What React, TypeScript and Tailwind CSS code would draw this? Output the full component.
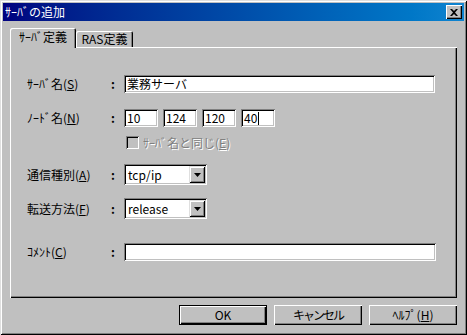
const raised =
  'shadow-[inset_1px_1px_0_#dfdfdf,inset_-1px_-1px_0_#000,inset_2px_2px_0_#fff,inset_-2px_-2px_0_#808080]';
const sunken =
  'shadow-[inset_1px_1px_0_#808080,inset_-1px_-1px_0_#fff,inset_2px_2px_0_#000,inset_-2px_-2px_0_#c0c0c0]';
const btn = 'shadow-[inset_1px_1px_0_#fff,inset_-1px_-1px_0_#000,inset_-2px_-2px_0_#808080]';

function Mn({ k }: { k: string }) {
  return (
    <span>
      (<span className="underline underline-offset-[1px]">{k}</span>)
    </span>
  );
}

function Field({ value, width, caret }: { value: string; width: string; caret?: boolean }) {
  return (
    <div className={`${width} h-[18px] bg-white ${sunken} flex items-center pl-[3px] text-black`}>
      <span className="leading-none">{value}</span>
      {caret && <span className="w-px h-[13px] bg-black ml-px" />}
    </div>
  );
}

function Select({ value }: { value: string }) {
  return (
    <div className={`w-[83px] h-[21px] bg-white ${sunken} flex items-center p-[2px]`}>
      <span className="flex-1 pl-[2px] leading-none">{value}</span>
      <div className={`w-[16px] h-[17px] bg-[#c0c0c0] ${raised} flex items-center justify-center`}>
        <svg width="7" height="4" viewBox="0 0 7 4">
          <path d="M0 0h7L3.5 4z" fill="#000" />
        </svg>
      </div>
    </div>
  );
}

function Row({ label, children, className }: { label: React.ReactNode; children: React.ReactNode; className: string }) {
  return (
    <div className={`flex items-center ${className}`}>
      <div className="w-[84px]">{label}</div>
      <div className="w-[13px] font-bold">:</div>
      {children}
    </div>
  );
}

export default function App() {
  return (
    <div
      className={`w-[467px] h-[335px] bg-[#c0c0c0] ${raised} p-[3px] flex flex-col text-[12px] text-black select-none`}
      style={{ fontFamily: '"Noto Sans CJK JP", "Noto Sans", sans-serif' }}
    >
      {/* Title bar */}
      <div className="h-[18px] bg-linear-to-r from-[#000080] to-[#1084d0] flex items-center justify-between pl-[2px] pr-[2px]">
        <span className="text-white leading-none">ｻｰﾊﾞの追加</span>
        <div className={`w-[16px] h-[14px] bg-[#c0c0c0] ${btn} flex items-center justify-center`}>
          <svg width="8" height="7" viewBox="0 0 8 7">
            <path d="M0 0h2l2 2 2-2h2L5 3.5 8 7H6L4 5 2 7H0l3-3.5z" fill="#000" />
          </svg>
        </div>
      </div>

      <div className="flex-1 flex flex-col px-[7px] pt-[7px]">
        {/* Tabs */}
        <div className="flex items-end h-[19px]">
          <div className="relative z-10 w-[66px] h-[20px] -mb-px bg-[#c0c0c0] rounded-t-[2px] shadow-[inset_1px_1px_0_#fff,inset_-1px_0_0_#000,inset_-2px_0_0_#808080] flex items-center justify-center pb-[2px]">
            ｻｰﾊﾞ定義
          </div>
          <div className="w-[57px] h-[16px] bg-[#c0c0c0] rounded-t-[2px] shadow-[inset_1px_1px_0_#fff,inset_-1px_0_0_#000,inset_-2px_0_0_#808080] flex items-center justify-center">
            RAS定義
          </div>
        </div>

        {/* Panel */}
        <div className="h-[251px] shadow-[inset_1px_1px_0_#fff,inset_-1px_-1px_0_#000,inset_-2px_-2px_0_#808080] flex flex-col pl-[17px]">
          <Row className="mt-[28px]" label={<span>ｻｰﾊﾞ名<Mn k="S" /></span>}>
            <Field value="業務サーバ" width="w-[311px]" />
          </Row>
          <Row className="mt-[16px]" label={<span>ﾉｰﾄﾞ名<Mn k="N" /></span>}>
            <div className="flex gap-[5px]">
              <Field value="10" width="w-[34px]" />
              <Field value="124" width="w-[34px]" />
              <Field value="120" width="w-[34px]" />
              <Field value="40" width="w-[34px]" caret />
            </div>
          </Row>
          <div className="flex items-center mt-[9px] ml-[99px] h-[13px] gap-[4px]">
            <div className={`w-[13px] h-[13px] bg-[#c0c0c0] ${sunken}`} />
            <span className="text-[#808080] [text-shadow:1px_1px_0_#fff] leading-none">
              ｻｰﾊﾞ名と同じ<Mn k="E" />
            </span>
          </div>
          <Row className="mt-[15px]" label={<span>通信種別<Mn k="A" /></span>}>
            <Select value="tcp/ip" />
          </Row>
          <Row className="mt-[13px]" label={<span>転送方法<Mn k="F" /></span>}>
            <Select value="release" />
          </Row>
          <Row className="mt-[24px]" label={<span>ｺﾒﾝﾄ<Mn k="C" /></span>}>
            <Field value="" width="w-[312px]" />
          </Row>
        </div>

        {/* Buttons */}
        <div className="flex justify-end gap-[7px] mt-[7px]">
          <div className="w-[88px] h-[20px] border border-black">
            <div className={`w-full h-full ${btn} flex items-center justify-center leading-none`}>OK</div>
          </div>
          <div className={`w-[88px] h-[20px] ${btn} flex items-center justify-center leading-none tracking-[-2px]`}>キャンセル</div>
          <div className={`w-[88px] h-[20px] ${btn} flex items-center justify-center leading-none`}>
            ﾍﾙﾌﾟ<Mn k="H" />
          </div>
        </div>
      </div>
    </div>
  );
}
